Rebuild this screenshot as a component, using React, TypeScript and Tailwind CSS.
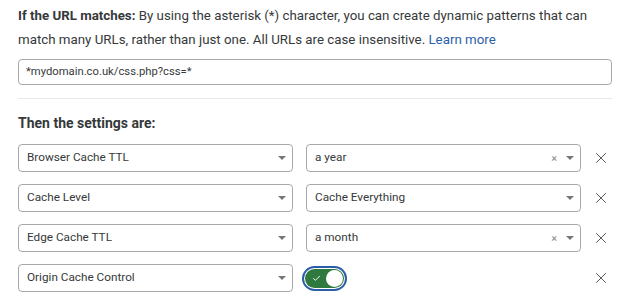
import { X, Check } from "lucide-react";

const font = { fontFamily: 'Roboto, "Liberation Sans", Arial, sans-serif' };

const Caret = () => (
  <svg width="8" height="4" viewBox="0 0 8 4" className="shrink-0">
    <path d="M0 0h8L4 4z" fill="#777" />
  </svg>
);

const Select = ({ value, clearable }: { value: string; clearable?: boolean }) => (
  <div className="flex h-[28px] w-[275px] shrink-0 items-center rounded-[4px] border border-[#a8a8a8] bg-white pl-[8px] pr-[6px]">
    <span className="flex-1 text-[11.75px] text-[#36393a]">{value}</span>
    {clearable && <span className="mr-[9px] text-[11px] leading-none text-[#888]">×</span>}
    <Caret />
  </div>
);

const Remove = () => (
  <div className="ml-[11px] flex w-[18px] shrink-0 justify-center">
    <X size={20} strokeWidth={1.3} className="text-[#555]" />
  </div>
);

const Toggle = () => (
  <div className="ml-[13px] flex h-[28px] w-[275px] shrink-0 items-center">
    <div className="-ml-[4px] rounded-full border-2 border-[#2c5ea8] p-[1px]">
      <div className="flex h-[19px] w-[39px] items-center justify-between rounded-full bg-[#2e7a3e] pl-[7px] pr-[1px]">
        <Check size={9} strokeWidth={2.5} className="text-white" />
        <div className="h-[17px] w-[17px] rounded-full bg-white" />
      </div>
    </div>
  </div>
);

const rows = [
  { left: "Browser Cache TTL", right: "a year", clearable: true },
  { left: "Cache Level", right: "Cache Everything" },
  { left: "Edge Cache TTL", right: "a month", clearable: true },
];

export default function App() {
  return (
    <div className="h-[300px] w-[627px] overflow-hidden bg-white pl-[18px] pr-[15px] pt-[4px] text-[#36393a]" style={font}>
      <p className="text-[13.3px] leading-[24px]">
        <span className="font-bold">If the URL matches:</span> By using the asterisk (*) character, you can create
        dynamic patterns that can match many URLs, rather than just one. All URLs are case insensitive.{" "}
        <a className="text-[#2c5ea8]">Learn more</a>
      </p>
      <div className="mt-[7px] flex h-[26px] items-center rounded-[4px] border border-[#a8a8a8] px-[7px] text-[11.25px]">
        *mydomain.co.uk/css.php?css=*
      </div>
      <div className="mt-[13px] h-px bg-[#e8e8e8]" />
      <h3 className="mt-[14px] text-[14px] font-bold leading-[20px]">Then the settings are:</h3>
      <div className="mt-[11px] flex flex-col gap-[12px]">
        {rows.map((r) => (
          <div key={r.left} className="flex items-center">
            <Select value={r.left} />
            <div className="ml-[13px]">
              <Select value={r.right} clearable={r.clearable} />
            </div>
            <Remove />
          </div>
        ))}
        <div className="flex items-center">
          <Select value="Origin Cache Control" />
          <Toggle />
          <Remove />
        </div>
      </div>
    </div>
  );
}
